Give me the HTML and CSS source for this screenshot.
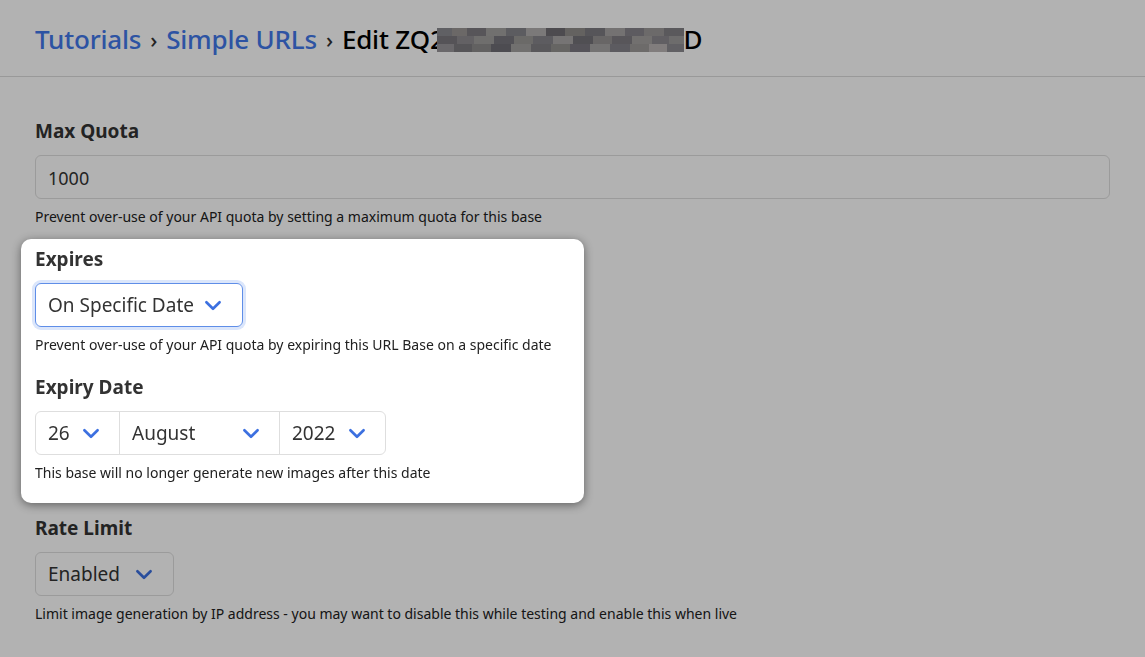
FILE: index.html
```html
<!DOCTYPE html>
<html lang="en">
<head>
    <meta charset="UTF-8">
    <meta name="viewport" content="width=device-width, initial-scale=1.0">
    <title>Edit URL Base</title>
    <link rel="stylesheet" href="styles.css">
</head>
<body>

<header class="page-header">
    <h1 class="crumbs">
        <a href="#">Tutorials</a>
        <span class="sep">›</span>
        <a href="#">Simple URLs</a>
        <span class="sep">›</span>
        <span class="current">Edit ZQ2<span class="redacted"></span>D</span>
    </h1>
</header>

<main class="form">
    <div class="group">
        <label class="label">Max Quota</label>
        <div class="input">1000</div>
        <p class="help">Prevent over-use of your API quota by setting a maximum quota for this base</p>
    </div>

    <div class="spotlight">
        <div class="group">
            <label class="label">Expires</label>
            <div class="select select-focus expires">
                <span>On Specific Date</span>
                <svg class="chevron" viewBox="0 0 16 10"><path d="M2 2 L8 8 L14 2"/></svg>
            </div>
            <p class="help">Prevent over-use of your API quota by expiring this URL Base on a specific date</p>
        </div>

        <div class="group last">
            <label class="label">Expiry Date</label>
            <div class="date-group">
                <div class="date-cell day">
                    <span>26</span>
                    <svg class="chevron" viewBox="0 0 16 10"><path d="M2 2 L8 8 L14 2"/></svg>
                </div>
                <div class="date-cell month">
                    <span>August</span>
                    <svg class="chevron" viewBox="0 0 16 10"><path d="M2 2 L8 8 L14 2"/></svg>
                </div>
                <div class="date-cell year">
                    <span>2022</span>
                    <svg class="chevron" viewBox="0 0 16 10"><path d="M2 2 L8 8 L14 2"/></svg>
                </div>
            </div>
            <p class="help">This base will no longer generate new images after this date</p>
        </div>
    </div>

    <div class="group">
        <label class="label">Rate Limit</label>
        <div class="select rate">
            <span>Enabled</span>
            <svg class="chevron" viewBox="0 0 16 10"><path d="M2 2 L8 8 L14 2"/></svg>
        </div>
        <p class="help">Limit image generation by IP address - you may want to disable this while testing and enable this when live</p>
    </div>
</main>

<div class="dim"></div>

</body>
</html>
```

FILE: styles.css
```css
* {
    margin: 0;
    padding: 0;
    box-sizing: border-box;
}

body {
    width: 100vw;
    height: 100vh;
    overflow: hidden;
    background: #fff;
    color: #333;
    font-family: "Noto Sans", "Open Sans", sans-serif;
}

a {
    text-decoration: none;
    color: #4178ea;
}

/* header */

.page-header {
    height: 77px;
    padding: 22px 35px 0;
    border-bottom: 1px solid #dcdcdc;
}

.crumbs {
    font-size: 26px;
    font-weight: 500;
    letter-spacing: -0.2px;
    line-height: 34px;
    display: flex;
    align-items: center;
    gap: 9px;
}

.crumbs .sep {
    font-size: 22px;
    color: #333;
}

.crumbs .current {
    color: #000;
    display: flex;
    align-items: center;
}

.redacted {
    display: inline-block;
    width: 247px;
    height: 24px;
    margin-left: -8px;
    margin-top: 2px;
    background-image:
        linear-gradient(to right, #8a8a90 0 6%, #9a9694 6% 12%, #7d7a80 12% 20%, #a2a1a0 20% 28%, #85848a 28% 36%, #b0aeae 36% 44%, #6f6c72 44% 52%, #908d8a 52% 60%, #7b7a80 60% 68%, #a6a4a4 68% 76%, #86838a 76% 84%, #9b9898 84% 92%, #828085 92% 100%),
        linear-gradient(to right, #7a787d 0 8%, #8f8c90 8% 15%, #a09e9c 15% 23%, #76757b 23% 31%, #9a9896 31% 39%, #86858a 39% 47%, #a9a7a6 47% 55%, #737177 55% 63%, #959292 63% 71%, #7e7c82 71% 79%, #a4a1a0 79% 87%, #8b898e 87% 94%, #9d9b9b 94% 100%),
        linear-gradient(to right, #98969a 0 7%, #7c7a7f 7% 14%, #8d8b8c 14% 22%, #6f6e74 22% 30%, #a3a1a0 30% 38%, #807e83 38% 46%, #93918f 46% 54%, #7a7880 54% 62%, #a7a5a5 62% 70%, #85838a 70% 78%, #9c9a98 78% 86%, #b9b3b3 86% 93%, #8c8a90 93% 100%);
    background-size: 100% 8px;
    background-position: 0 0, 0 8px, 0 16px;
    background-repeat: no-repeat;
}

/* form */

.form {
    padding: 40px 35px 0;
}

.group {
    margin-bottom: 18px;
}

.group.last {
    margin-bottom: 0;
}

.label {
    display: block;
    font-size: 19px;
    font-weight: 700;
    line-height: 28px;
    margin-bottom: 10px;
}

.input {
    height: 44px;
    padding: 0 12px;
    border: 1px solid #dedede;
    border-radius: 6px;
    font-size: 18px;
    line-height: 44px;
    color: #333;
}

.help {
    margin-top: 7px;
    font-size: 14px;
    line-height: 21px;
    color: #212121;
}

.select {
    display: flex;
    align-items: center;
    justify-content: space-between;
    height: 44px;
    padding: 0 20px 0 12px;
    border: 1px solid #dedede;
    border-radius: 6px;
    font-size: 19px;
    color: #333;
}

.select.expires {
    width: 208px;
}

.select.rate {
    width: 139px;
}

.select-focus {
    border-color: #5f8ee8;
    box-shadow: 0 0 0 3px #dbe6fb;
}

.chevron {
    width: 18px;
    height: 11px;
    fill: none;
    stroke: #3c70e0;
    stroke-width: 2.4;
    stroke-linecap: round;
    stroke-linejoin: round;
}

.date-group {
    display: inline-flex;
    height: 44px;
    border: 1px solid #dedede;
    border-radius: 6px;
}

.date-cell {
    display: flex;
    align-items: center;
    justify-content: space-between;
    padding: 0 19px 0 12px;
    font-size: 19px;
    color: #333;
}

.date-cell + .date-cell {
    border-left: 1px solid #dedede;
}

.day {
    width: 83px;
}

.month {
    width: 160px;
}

.year {
    width: 106px;
}

/* highlighted section above the dim layer */

.spotlight {
    position: relative;
    z-index: 2;
    margin: -6px -14px 11px;
    padding: 6px 14px 20px;
    width: 563px;
    background: #fff;
    border-radius: 10px;
    box-shadow: 0 2px 10px rgba(0, 0, 0, .45);
}

.dim {
    position: fixed;
    inset: 0;
    z-index: 1;
    background: rgba(0, 0, 0, .3);
}
```
